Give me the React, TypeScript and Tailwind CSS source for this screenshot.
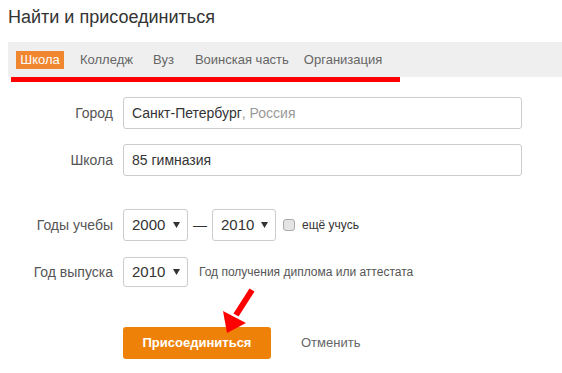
import React from "react";

function Select({ value, w, h }: { value: string; w: string; h: string }) {
  return (
    <div
      className={`${w} ${h} flex items-center justify-between rounded-[3px] border border-[#cccccc] bg-white pl-[8px] pr-[7px] text-[15px] text-[#333333]`}
    >
      <span>{value}</span>
      <svg width="7" height="6" viewBox="0 0 7 6">
        <polygon points="0,0 7,0 3.5,6" fill="#333333" />
      </svg>
    </div>
  );
}

export default function App() {
  return (
    <div
      className="relative h-[373px] w-[562px] overflow-hidden bg-white"
      style={{ fontFamily: '"Liberation Sans", Arial, sans-serif' }}
    >
      <div className="pl-[8px] pt-[6px] text-[18px] leading-[22px] text-[#333333]">
        Найти и присоединиться
      </div>

      <div className="ml-[8px] mt-[14px] flex h-[35px] items-center bg-[#efefef] pl-[8px] text-[13px] text-[#666666]">
        <span className="flex h-[18px] w-[48px] items-center justify-center bg-[#f0862f] text-white">Школа</span>
        <span className="ml-[16px]">Колледж</span>
        <span className="ml-[20px]">Вуз</span>
        <span className="ml-[21px]">Воинская часть</span>
        <span className="ml-[15px]">Организация</span>
      </div>
      <div className="ml-[11px] h-[5px] w-[389px] bg-[#ff0000]" />

      <div className="mt-[15px] flex items-center">
        <div className="w-[113px] text-right text-[14px] text-[#555555]">Город</div>
        <div className="ml-[10px] flex h-[32px] w-[399px] items-center rounded-[3px] border border-[#cccccc] pl-[8px] text-[14px]">
          <span className="text-[#333333]">Санкт-Петербург</span>
          <span className="text-[#999999]">, Россия</span>
        </div>
      </div>

      <div className="mt-[15px] flex items-center">
        <div className="w-[113px] text-right text-[14px] text-[#555555]">Школа</div>
        <div className="ml-[10px] flex h-[32px] w-[399px] items-center rounded-[3px] border border-[#cccccc] pl-[8px] text-[14px] text-[#333333]">
          85 гимназия
        </div>
      </div>

      <div className="mt-[33px] flex items-center">
        <div className="w-[113px] text-right text-[14px] text-[#555555]">Годы учебы</div>
        <div className="ml-[10px]">
          <Select value="2000" w="w-[65px]" h="h-[32px]" />
        </div>
        <span className="mx-[5px] text-[14px] text-[#333333]">—</span>
        <Select value="2010" w="w-[64px]" h="h-[32px]" />
        <span className="ml-[7px] h-[12px] w-[12px] rounded-[3px] border border-[#aaaaaa] bg-[#e4e4e4]" />
        <span className="ml-[7px] text-[12px] text-[#333333]">ещё учусь</span>
      </div>

      <div className="mt-[16px] flex items-center">
        <div className="w-[113px] text-right text-[14px] text-[#555555]">Год выпуска</div>
        <div className="ml-[10px]">
          <Select value="2010" w="w-[65px]" h="h-[30px]" />
        </div>
        <span className="ml-[11px] text-[12px] text-[#555555]">Год получения диплома или аттестата</span>
      </div>

      <div className="mt-[40px] flex items-center pl-[123px]">
        <div className="flex h-[32px] w-[148px] items-center justify-center rounded-[3px] bg-[#ee8208] text-[13px] font-bold text-white">
          Присоединиться
        </div>
        <span className="ml-[30px] text-[13px] text-[#666666]">Отменить</span>
      </div>

      <svg className="absolute left-[215px] top-[283px]" width="45" height="55" viewBox="215 283 45 55">
        <line x1="252" y1="290" x2="236" y2="315" stroke="#ff0000" strokeWidth="6" strokeLinecap="butt" />
        <polygon points="223,311 246,323 227,333" fill="#ff0000" />
      </svg>
    </div>
  );
}
